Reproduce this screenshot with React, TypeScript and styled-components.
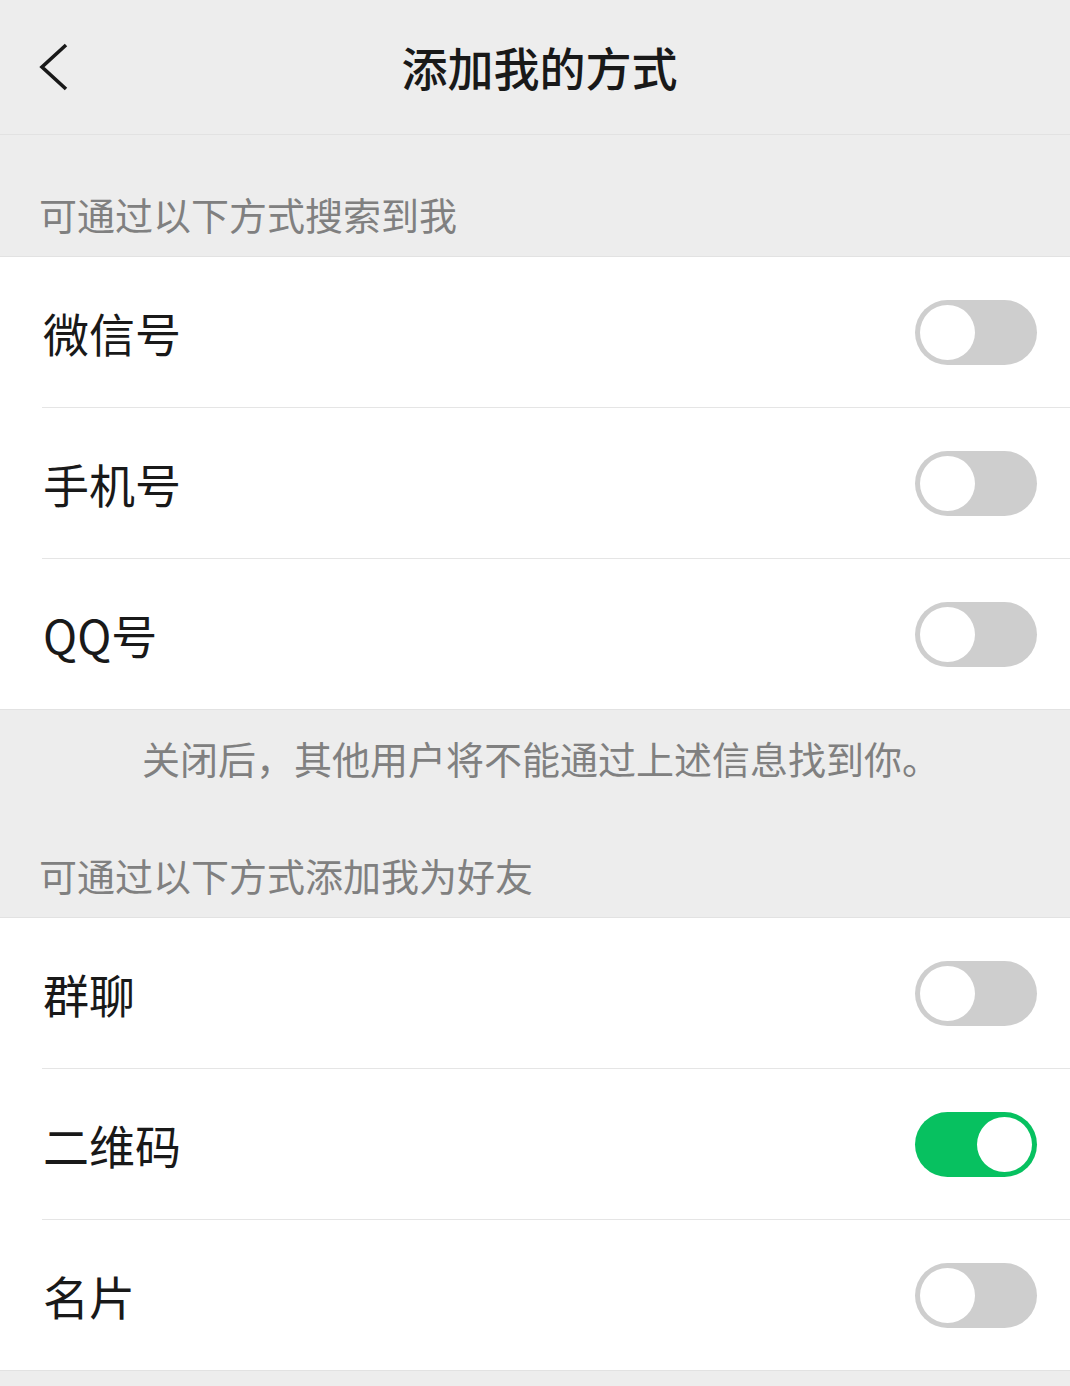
import React, { useState } from "react";
import styled, { createGlobalStyle } from "styled-components";

const GlobalStyle = createGlobalStyle`
  html, body {
    margin: 0;
    padding: 0;
    background: #ededed;
  }
  body {
    font-family: "Noto Sans CJK SC", "Noto Sans", sans-serif;
    -webkit-font-smoothing: antialiased;
  }
`;

const Page = styled.div`
  width: 1070px;
  min-height: 1386px;
  background: #ededed;
`;

const NavBar = styled.div`
  height: 134px;
  display: grid;
  grid-template-columns: 120px 1fr 120px;
  align-items: center;
  border-bottom: 1px solid #e2e2e2;
`;

const BackButton = styled.button`
  border: 0;
  background: none;
  padding: 0 0 0 38px;
  margin: 0;
  display: flex;
  align-items: center;
  height: 100%;
  cursor: pointer;
`;

const Title = styled.h1`
  margin: 0;
  text-align: center;
  font-size: 46px;
  font-weight: 500;
  color: #191919;
  line-height: 1;
  padding: 0 0 2px 9px;
`;

const SectionTitle = styled.div<{ $height: number }>`
  height: ${(p) => p.$height}px;
  display: flex;
  align-items: flex-end;
  padding: 0 0 16px 39px;
  box-sizing: border-box;
  font-size: 38px;
  line-height: 52px;
  color: #808080;
`;

const List = styled.div`
  background: #fff;
  border-top: 1px solid #e2e2e2;
  border-bottom: 1px solid #e2e2e2;
`;

const Row = styled.div`
  height: 150px;
  display: flex;
  align-items: center;
  justify-content: space-between;
  padding: 0 33px 0 43px;

  & + & {
    border-top: 1px solid #e5e5e5;
    margin-left: 42px;
    padding-left: 1px;
  }
`;

const Label = styled.span`
  font-size: 46px;
  color: #191919;
  line-height: 1;
`;

const Track = styled.button<{ $on: boolean }>`
  width: 122px;
  height: 65px;
  border-radius: 33px;
  border: 0;
  padding: 5px;
  margin: 0;
  box-sizing: border-box;
  background: ${(p) => (p.$on ? "#07c160" : "#cecece")};
  display: flex;
  justify-content: ${(p) => (p.$on ? "flex-end" : "flex-start")};
  align-items: center;
  cursor: pointer;
`;

const Knob = styled.span`
  width: 55px;
  height: 55px;
  border-radius: 50%;
  background: #fff;
`;

const Note = styled.div`
  height: 94px;
  display: flex;
  align-items: center;
  justify-content: center;
  font-size: 38px;
  color: #808080;
  padding-left: 12px;
`;

type Item = { label: string; on: boolean };

const Toggle: React.FC<{ on: boolean; onClick: () => void }> = ({ on, onClick }) => (
  <Track $on={on} onClick={onClick} aria-pressed={on}>
    <Knob />
  </Track>
);

const SwitchList: React.FC<{ items: Item[]; onToggle: (i: number) => void }> = ({ items, onToggle }) => (
  <List>
    {items.map((it, i) => (
      <Row key={it.label}>
        <Label>{it.label}</Label>
        <Toggle on={it.on} onClick={() => onToggle(i)} />
      </Row>
    ))}
  </List>
);

export default function App() {
  const [search, setSearch] = useState<Item[]>([
    { label: "微信号", on: false },
    { label: "手机号", on: false },
    { label: "QQ号", on: false },
  ]);
  const [add, setAdd] = useState<Item[]>([
    { label: "群聊", on: false },
    { label: "二维码", on: true },
    { label: "名片", on: false },
  ]);

  const flip = (list: Item[], i: number) =>
    list.map((it, j) => (j === i ? { ...it, on: !it.on } : it));

  return (
    <Page>
      <GlobalStyle />
      <NavBar>
        <BackButton aria-label="返回">
          <svg width="32" height="48" viewBox="0 0 32 48" fill="none">
            <polyline
              points="28,2 4,24 28,46"
              stroke="#191919"
              strokeWidth="3.6"
              strokeLinecap="butt"
              strokeLinejoin="miter"
            />
          </svg>
        </BackButton>
        <Title>添加我的方式</Title>
        <div />
      </NavBar>

      <SectionTitle $height={121}>可通过以下方式搜索到我</SectionTitle>
      <SwitchList items={search} onToggle={(i) => setSearch(flip(search, i))} />

      <Note>关闭后，其他用户将不能通过上述信息找到你。</Note>
      <SectionTitle $height={113}>可通过以下方式添加我为好友</SectionTitle>
      <SwitchList items={add} onToggle={(i) => setAdd(flip(add, i))} />
    </Page>
  );
}
